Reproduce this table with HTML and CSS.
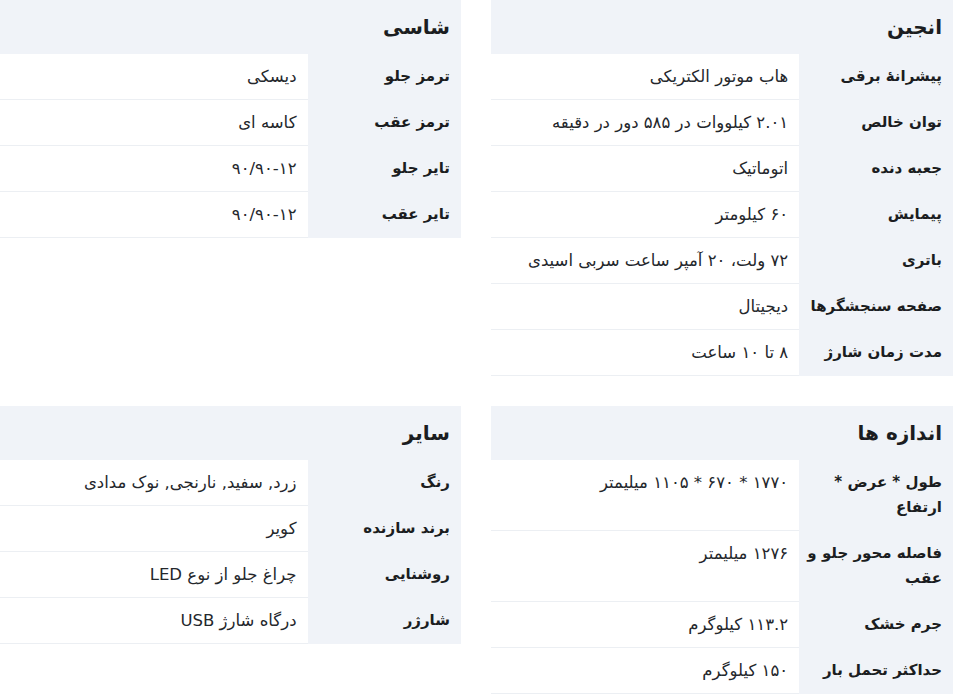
FILE: index.html
```html
<!DOCTYPE html>
<html lang="fa" dir="rtl">
<head>
<meta charset="utf-8">
<title>مشخصات فنی</title>
<link rel="stylesheet" href="styles.css">
</head>
<body>
<div class="specs">
  <section class="group">
    <h2 class="group-title">انجین</h2>
    <table class="spec-table">
      <tr><th>پیشرانهٔ برقی</th><td>هاب موتور الکتریکی</td></tr>
      <tr><th>توان خالص</th><td>۲.۰۱ کیلووات در ۵۸۵ دور در دقیقه</td></tr>
      <tr><th>جعبه دنده</th><td>اتوماتیک</td></tr>
      <tr><th>پیمایش</th><td>۶۰ کیلومتر</td></tr>
      <tr><th>باتری</th><td>۷۲ ولت، ۲۰ آمپر ساعت سربی اسیدی</td></tr>
      <tr><th>صفحه سنجشگرها</th><td>دیجیتال</td></tr>
      <tr><th>مدت زمان شارژ</th><td>۸ تا ۱۰ ساعت</td></tr>
    </table>
  </section>
  <section class="group">
    <h2 class="group-title">شاسی</h2>
    <table class="spec-table">
      <tr><th>ترمز جلو</th><td>دیسکی</td></tr>
      <tr><th>ترمز عقب</th><td>کاسه ای</td></tr>
      <tr><th>تایر جلو</th><td><span dir="ltr">۹۰/۹۰-۱۲</span></td></tr>
      <tr><th>تایر عقب</th><td><span dir="ltr">۹۰/۹۰-۱۲</span></td></tr>
    </table>
  </section>
  <section class="group">
    <h2 class="group-title">اندازه ها</h2>
    <table class="spec-table">
      <tr><th>طول * عرض * ارتفاع</th><td>۱۷۷۰ * ۶۷۰ * ۱۱۰۵ میلیمتر</td></tr>
      <tr><th>فاصله محور جلو و عقب</th><td>۱۲۷۶ میلیمتر</td></tr>
      <tr><th>جرم خشک</th><td>۱۱۳.۲ کیلوگرم</td></tr>
      <tr><th>حداکثر تحمل بار</th><td>۱۵۰ کیلوگرم</td></tr>
    </table>
  </section>
  <section class="group">
    <h2 class="group-title">سایر</h2>
    <table class="spec-table">
      <tr><th>رنگ</th><td>زرد, سفید, نارنجی, نوک مدادی</td></tr>
      <tr><th>برند سازنده</th><td>کویر</td></tr>
      <tr><th>روشنایی</th><td>چراغ جلو از نوع LED</td></tr>
      <tr><th>شارژر</th><td>درگاه شارژ USB</td></tr>
    </table>
  </section>
</div>
</body>
</html>
```

FILE: styles.css
```css
html, body {
  margin: 0;
  padding: 0;
  background: #ffffff;
}

body {
  font-family: "DejaVu Sans", "Noto Sans", sans-serif;
  color: #1f2328;
  width: 953px;
}

.specs {
  display: grid;
  grid-template-columns: 462px 461px;
  column-gap: 30px;
  row-gap: 30px;
  align-items: start;
}

.group {
  margin: 0;
}

.group-title {
  margin: 0;
  height: 54px;
  box-sizing: border-box;
  display: flex;
  align-items: center;
  padding: 0 11px;
  background: #f0f3f8;
  font-size: 20px;
  font-weight: bold;
  color: #1b1d21;
}

.spec-table {
  width: 100%;
  border-collapse: collapse;
  table-layout: fixed;
}

.spec-table th,
.spec-table td {
  box-sizing: border-box;
  padding: 10px 11px;
  line-height: 25px;
  vertical-align: top;
  text-align: right;
  border-bottom: 1px solid #eceff3;
}

.spec-table th {
  width: 33.3%;
  padding-left: 4px;
  background: #f0f3f8;
  font-size: 15px;
  font-weight: bold;
  color: #1b1d21;
  border-bottom-color: #f0f3f8;
}

.spec-table td {
  font-size: 16.5px;
  font-weight: normal;
  color: #24272c;
  background: #ffffff;
}
```
